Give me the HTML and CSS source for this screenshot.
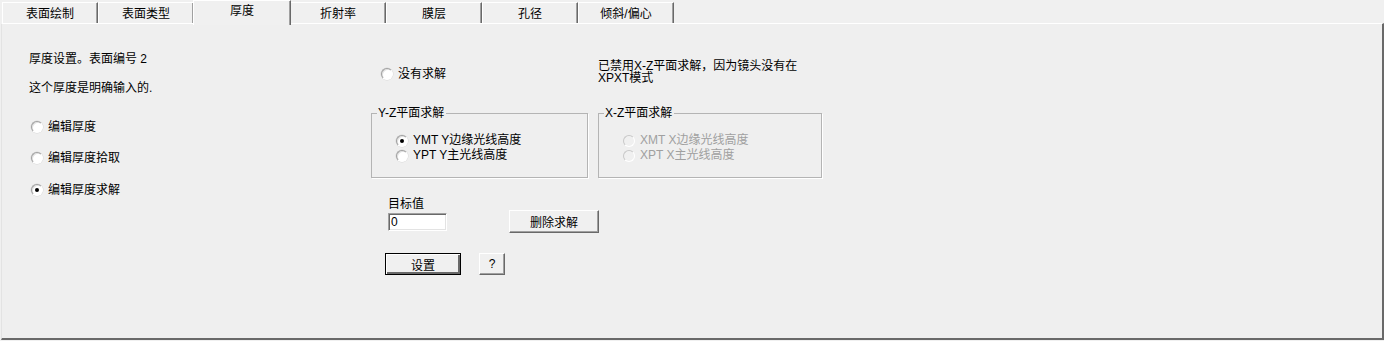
FILE: index.html
```html
<!DOCTYPE html>
<html>
<head>
	<meta charset="utf-8">
	<link rel="stylesheet" href="styles.css">
	<title>厚度</title>
</head>
<body>
	<div class="tabs">
		<div class="tab">表面绘制</div>
		<div class="tab">表面类型</div>
		<div class="tab active">厚度</div>
		<div class="tab">折射率</div>
		<div class="tab">膜层</div>
		<div class="tab">孔径</div>
		<div class="tab">倾斜/偏心</div>
	</div>

	<div class="panel">
		<div class="left_col">
			<div class="line first">厚度设置。表面编号 2</div>
			<div class="line second">这个厚度是明确输入的.</div>
			<label class="opt opt1"><input type="radio" name="mode"> 编辑厚度</label>
			<label class="opt opt2"><input type="radio" name="mode"> 编辑厚度拾取</label>
			<label class="opt opt3"><input type="radio" name="mode" checked> 编辑厚度求解</label>
		</div>

		<div class="solve_area">
			<div class="top_row">
				<div class="no_solve">
					<label class="opt"><input type="radio" name="solve"> 没有求解</label>
				</div>
				<div class="note">已禁用X-Z平面求解，因为镜头没有在<br>XPXT模式</div>
			</div>

			<div class="groups">
				<fieldset class="group yz">
					<legend>Y-Z平面求解</legend>
					<div class="group_body">
						<label class="opt small"><input type="radio" name="yz" checked> YMT Y边缘光线高度</label>
						<label class="opt small"><input type="radio" name="yz"> YPT Y主光线高度</label>
					</div>
				</fieldset>
				<fieldset class="group xz">
					<legend>X-Z平面求解</legend>
					<div class="group_body">
						<label class="opt small disabled"><input type="radio" name="xz" disabled> XMT X边缘光线高度</label>
						<label class="opt small disabled"><input type="radio" name="xz" disabled> XPT X主光线高度</label>
					</div>
				</fieldset>
			</div>

			<div class="target_row">
				<div class="target">
					<div class="target_label">目标值</div>
					<input type="text" class="target_input" value="0">
				</div>
				<button class="btn btn_delete">删除求解</button>
			</div>

			<div class="button_row">
				<button class="btn btn_set">设置</button>
				<button class="btn btn_help">?</button>
			</div>
		</div>
	</div>
</body>
</html>
```

FILE: styles.css
```css
body {
	margin: 0;
	background: #f0f0f0;
	font-family: "Liberation Sans", "Noto Sans CJK SC", sans-serif;
	font-size: 12px;
	color: #000;
}

/* tab strip */
.tabs {
	display: flex;
	height: 23px;
	padding-left: 2px;
	align-items: flex-end;
}
.tab {
	box-sizing: border-box;
	width: 96px;
	height: 21px;
	padding-top: 2px;
	line-height: 18px;
	text-align: center;
	border-top: 1px solid #fff;
	border-left: 1px solid #fff;
	border-right: 1px solid #696969;
	box-shadow: inset -1px 0 #a0a0a0;
	background: #f0f0f0;
}
.tab.active {
	position: relative;
	z-index: 2;
	height: 25px;
	margin-bottom: -2px;
	padding-top: 0;
	line-height: 21px;
	width: 98px;
	margin-left: -1px;
	margin-right: -1px;
}

/* page */
.panel {
	box-sizing: border-box;
	margin-left: 1px;
	width: 1383px;
	height: 317px;
	border-top: 1px solid #fff;
	border-left: 1px solid #e3e3e3;
	border-right: 2px solid #696969;
	border-bottom: 2px solid #696969;
	background: #efefef;
	display: flex;
	align-items: flex-start;
	padding: 28px 0 0 27px;
}

.left_col {
	flex: none;
	width: 342px;
	display: flex;
	flex-direction: column;
}
.line {
	line-height: 14px;
}
.second { margin-top: 15px; }

.opt {
	display: flex;
	align-items: center;
	height: 14px;
	line-height: 14px;
	white-space: nowrap;
}
.opt input {
	-webkit-appearance: none;
	appearance: none;
	box-sizing: border-box;
	width: 12px;
	height: 12px;
	margin: 0 5px 0 2px;
	border-radius: 50%;
	border: 1px solid;
	border-color: #a0a0a0 #fff #fff #a0a0a0;
	background: #fff;
	box-shadow: inset 1px 1px #e3e3e3, 0 0 0 0.5px #d8d8d8;
	position: relative;
}
.opt input:checked::after {
	content: "";
	position: absolute;
	left: 3px;
	top: 3px;
	width: 4px;
	height: 4px;
	border-radius: 50%;
	background: #000;
}
.opt1 { margin-top: 25px; }
.opt2 { margin-top: 17px; }
.opt3 { margin-top: 18px; }

.opt.small {
	height: 15px;
	line-height: 15px;
}
.opt.disabled {
	color: #a0a0a0;
}
.opt.disabled input {
	background: #f0f0f0;
	box-shadow: none;
	border-color: #c8c8c8 #fff #fff #c8c8c8;
}

/* solve area */
.solve_area {
	flex: none;
	display: flex;
	flex-direction: column;
}
.top_row {
	display: flex;
	height: 54px;
}
.no_solve {
	flex: none;
	box-sizing: border-box;
	width: 227px;
	padding: 15px 0 0 8px;
}
.note {
	flex: none;
	margin-top: 8px;
	line-height: 12px;
	white-space: nowrap;
}

.groups {
	display: flex;
	gap: 10px;
}
.group {
	margin: 0;
	padding: 0;
	border: 1px solid #b4b4b4;
	box-shadow: 1px 1px #fff;
}
.group.yz { width: 217px; box-sizing: border-box; }
.group.xz { width: 224px; box-sizing: border-box; }
.group legend {
	margin-left: 5px;
	padding: 0 2px 0 1px;
	line-height: 14px;
}
.group_body {
	padding: 13px 0 14px 22px;
}

.target_row {
	display: flex;
	align-items: flex-start;
	margin-top: 19px;
	padding-left: 17px;
}
.target_label {
	line-height: 14px;
}
.target_input {
	display: block;
	box-sizing: border-box;
	width: 59px;
	height: 18px;
	margin-top: 2px;
	padding: 0 2px;
	border: 1px solid;
	border-color: #a0a0a0 #fff #fff #a0a0a0;
	box-shadow: inset 1px 1px #696969, inset -1px -1px #e3e3e3;
	background: #fff;
	font: inherit;
}

.btn {
	box-sizing: border-box;
	height: 23px;
	padding: 0;
	font: inherit;
	color: #000;
	background: #f0f0f0;
	border: 1px solid;
	border-color: #fff #696969 #696969 #fff;
	box-shadow: inset -1px -1px #a0a0a0;
}
.btn_delete {
	width: 90px;
	margin: 13px 0 0 62px;
}

.button_row {
	display: flex;
	margin-top: 20px;
	padding-left: 14px;
}
.btn_set {
	width: 76px;
	height: 22px;
	border: 1px solid #000;
	box-shadow: inset 1px 1px #fff, inset -2px -2px #696969;
}
.btn_help {
	width: 26px;
	height: 22px;
	margin-left: 18px;
}
```
